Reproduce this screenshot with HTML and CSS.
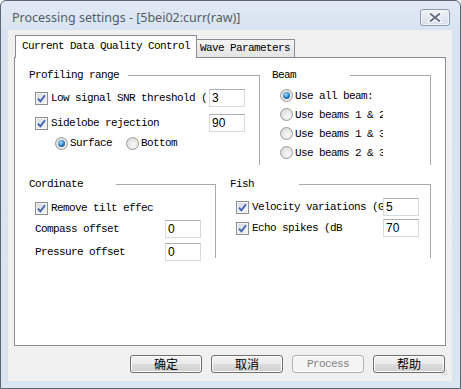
FILE: index.html
```html
<!DOCTYPE html>
<html lang="en">
<head>
  <meta charset="UTF-8">
  <title>Processing settings</title>
  <link rel="stylesheet" href="styles.css">
</head>
<body>
  <div class="window">
    <div class="titlebar">
      <span class="title">Processing settings - [5bei02:curr(raw)]</span>
      <span class="close">
        <svg width="16" height="11" viewBox="0 0 16 11">
          <path d="M3 1.5 L13 9.5 M13 1.5 L3 9.5" stroke="#fbfcfe" stroke-width="4.5" stroke-linecap="round"/>
          <path d="M3 1.5 L13 9.5 M13 1.5 L3 9.5" stroke="#6a7382" stroke-width="2.2"/>
        </svg>
      </span>
    </div>

    <div class="client">
      <div class="tabs">
        <div class="tab tab-active">Current Data Quality Control</div>
        <div class="tab">Wave Parameters</div>
      </div>

      <div class="pane">
        <div class="group-row">
          <!-- Profiling range -->
          <div class="group group-profiling">
            <div class="group-title title-profiling">Profiling range</div>
            <div class="row mt-7">
              <span class="cb"><svg width="9" height="9" viewBox="0 0 9 9"><path d="M1 4.6 L3.4 7.3 L8 1.2" fill="none" stroke="#3f5fae" stroke-width="1.8"/></svg></span>
              <span class="lbl lbl-prof">Low signal SNR threshold (</span>
              <span class="field">3</span>
            </div>
            <div class="row mt-5">
              <span class="cb"><svg width="9" height="9" viewBox="0 0 9 9"><path d="M1 4.6 L3.4 7.3 L8 1.2" fill="none" stroke="#3f5fae" stroke-width="1.8"/></svg></span>
              <span class="lbl lbl-prof">Sidelobe rejection</span>
              <span class="field">90</span>
            </div>
            <div class="row radio-row">
              <span class="rb rb-on"></span><span class="rlbl">Surface</span>
              <span class="rb rb-gap"></span><span class="rlbl">Bottom</span>
            </div>
          </div>

          <!-- Beam -->
          <div class="group group-beam">
            <div class="group-title title-beam">Beam</div>
            <div class="beam-row mt-5"><span class="rb rb-on"></span><span class="lbl lbl-beam">Use all beam:</span></div>
            <div class="beam-row"><span class="rb"></span><span class="lbl lbl-beam">Use beams 1 &amp; 2</span></div>
            <div class="beam-row"><span class="rb"></span><span class="lbl lbl-beam">Use beams 1 &amp; 3</span></div>
            <div class="beam-row"><span class="rb"></span><span class="lbl lbl-beam">Use beams 2 &amp; 3</span></div>
          </div>
        </div>

        <div class="group-row group-row-bottom">
          <!-- Cordinate -->
          <div class="group group-cord">
            <div class="group-title title-cord">Cordinate</div>
            <div class="row mt-8">
              <span class="cb"><svg width="9" height="9" viewBox="0 0 9 9"><path d="M1 4.6 L3.4 7.3 L8 1.2" fill="none" stroke="#3f5fae" stroke-width="1.8"/></svg></span>
              <span class="lbl lbl-tilt">Remove tilt effec</span>
            </div>
            <div class="row mt-1">
              <span class="lbl lbl-cord">Compass offset</span>
              <span class="field">0</span>
            </div>
            <div class="row mt-3">
              <span class="lbl lbl-cord">Pressure offset</span>
              <span class="field">0</span>
            </div>
          </div>

          <!-- Fish -->
          <div class="group group-fish">
            <div class="group-title title-fish">Fish</div>
            <div class="row mt-7">
              <span class="cb"><svg width="9" height="9" viewBox="0 0 9 9"><path d="M1 4.6 L3.4 7.3 L8 1.2" fill="none" stroke="#3f5fae" stroke-width="1.8"/></svg></span>
              <span class="lbl lbl-fish">Velocity variations (G</span>
              <span class="field">5</span>
            </div>
            <div class="row mt-1">
              <span class="cb"><svg width="9" height="9" viewBox="0 0 9 9"><path d="M1 4.6 L3.4 7.3 L8 1.2" fill="none" stroke="#3f5fae" stroke-width="1.8"/></svg></span>
              <span class="lbl lbl-fish">Echo spikes (dB</span>
              <span class="field">70</span>
            </div>
          </div>
        </div>
      </div>

      <div class="buttons">
        <div class="btn">确定</div>
        <div class="btn">取消</div>
        <div class="btn btn-disabled">Process</div>
        <div class="btn">帮助</div>
      </div>

      <svg class="grip" width="6" height="6" viewBox="0 0 6 6">
        <rect x="4" y="0" width="1" height="1" fill="#b8b8b8"/>
        <rect x="2" y="2" width="1" height="1" fill="#b8b8b8"/>
        <rect x="4" y="2" width="1" height="1" fill="#b8b8b8"/>
        <rect x="0" y="4" width="1" height="1" fill="#b8b8b8"/>
        <rect x="2" y="4" width="1" height="1" fill="#b8b8b8"/>
        <rect x="4" y="4" width="1" height="1" fill="#b8b8b8"/>
      </svg>
    </div>
  </div>
</body>
</html>
```

FILE: styles.css
```css
body {
  margin: 0;
  background: #fff;
  font-family: "Liberation Mono", monospace;
  font-size: 11px;
  letter-spacing: -0.6px;
  color: #000;
}
.window {
  width: 461px;
  height: 389px;
  box-sizing: border-box;
  border: 1px solid #5b6573;
  border-radius: 6px 6px 0 0;
  background: linear-gradient(#e1eaf5, #d8e3f1 30px, #dae5f2);
  padding: 0 8px 7px 7px;
  display: flex;
  flex-direction: column;
}
.titlebar {
  height: 29px;
  box-sizing: border-box;
  padding: 4px 2px 0 4px;
  display: flex;
  align-items: center;
  justify-content: space-between;
}
.title {
  font-family: "Noto Sans", sans-serif;
  font-size: 12.5px;
  letter-spacing: 0;
  color: #545c66;
}
.close {
  width: 30px;
  height: 17px;
  box-sizing: border-box;
  border: 1px solid #8e99a8;
  border-radius: 3px;
  background: linear-gradient(#eef2f8, #d6dfeb);
  box-shadow: inset 0 0 0 1px #f4f7fb;
  display: flex;
  align-items: center;
  justify-content: center;
}
.client {
  flex: 1;
  background: #f0f0f0;
  padding: 5px 6px 0;
  position: relative;
}

/* tabs */
.tabs {
  display: flex;
  align-items: flex-end;
  height: 22px;
  padding-left: 1px;
}
.tab {
  width: 99px;
  height: 18px;
  box-sizing: border-box;
  margin-left: -1px;
  border: 1px solid #898c95;
  border-bottom: none;
  background: linear-gradient(#f4f4f4, #e4e4e4);
  padding-left: 3px;
  line-height: 17px;
  white-space: nowrap;
}
.tab-active {
  width: 182px;
  height: 23px;
  margin-left: 0;
  margin-bottom: -1px;
  background: #fff;
  padding-left: 6px;
  line-height: 21px;
  position: relative;
  z-index: 1;
}
.pane {
  height: 289px;
  box-sizing: border-box;
  border: 1px solid #898c95;
  background: #fff;
  padding: 17px 0 0 14px;
}

/* group boxes */
.group-row {
  display: flex;
  gap: 12px;
}
.group-row-bottom {
  margin-top: 19px;
  gap: 14px;
}
.group {
  box-sizing: border-box;
  border-top: 1px solid #a9a9a9;
  border-right: 1px solid #a9a9a9;
}
.group-profiling { width: 231px; height: 90px; }
.group-beam { width: 159px; height: 90px; }
.group-cord { width: 187px; height: 74px; }
.group-fish { width: 201px; height: 74px; }
.group-title {
  height: 12px;
  line-height: 12px;
  margin-top: -7px;
  background: #fff;
  white-space: nowrap;
}
.title-profiling { width: 99px; }
.title-beam { width: 78px; }
.title-cord { width: 87px; }
.title-fish { width: 69px; }

.row {
  display: flex;
  align-items: center;
  height: 20px;
  padding-left: 6px;
}
.beam-row {
  display: flex;
  align-items: center;
  height: 19px;
  padding-left: 8px;
}
.lbl {
  white-space: nowrap;
  overflow: hidden;
  line-height: 14px;
}
.lbl-prof { width: 156px; margin-right: 2px; }
.lbl-beam { width: 88px; }
.lbl-tilt { width: 104px; }
.lbl-cord { width: 130px; }
.lbl-fish { width: 131px; }
.rlbl { line-height: 14px; }

.radio-row { padding-left: 26px; }
.rb-gap { margin-left: 14px; }

.mt-1 { margin-top: 1px; }
.mt-3 { margin-top: 3px; }
.mt-5 { margin-top: 5px; }
.mt-7 { margin-top: 7px; }
.mt-8 { margin-top: 8px; }

/* controls */
.cb {
  flex: none;
  width: 13px;
  height: 13px;
  box-sizing: border-box;
  margin-right: 3px;
  border: 1px solid #8e8f8f;
  background: linear-gradient(135deg, #d3d8e0, #f6f7f9);
  box-shadow: inset 0 0 0 1px #f4f4f4;
  display: flex;
  align-items: center;
  justify-content: center;
}
.rb {
  flex: none;
  width: 13px;
  height: 13px;
  box-sizing: border-box;
  margin-right: 2px;
  border: 1px solid #9a9a9a;
  border-radius: 50%;
  background: radial-gradient(circle at 60% 65%, #f9f9f9, #d4d4d4);
  display: flex;
  align-items: center;
  justify-content: center;
}
.rb-on::after {
  content: "";
  width: 7px;
  height: 7px;
  border-radius: 50%;
  background: radial-gradient(circle at 40% 35%, #a8dcf8, #2a7cc0 55%, #0f3d6e);
}
.field {
  flex: none;
  width: 36px;
  height: 18px;
  box-sizing: border-box;
  border: 1px solid #d5d9e0;
  border-top-color: #abadb3;
  background: #fff;
  padding-left: 2px;
  font-family: "Liberation Sans", sans-serif;
  font-size: 12px;
  letter-spacing: 0;
  line-height: 16px;
}

/* dialog buttons */
.buttons {
  display: flex;
  justify-content: flex-end;
  gap: 9px;
  margin-top: 9px;
  padding-right: 1px;
}
.btn {
  width: 72px;
  height: 18px;
  box-sizing: border-box;
  border: 1px solid #707070;
  border-radius: 3px;
  background: linear-gradient(#f2f2f2 0%, #ebebeb 50%, #dddddd 50%, #cfcfcf 100%);
  box-shadow: inset 0 0 0 1px #fafafa;
  display: flex;
  align-items: center;
  justify-content: center;
  font-family: "Noto Sans CJK SC", sans-serif;
  font-size: 12px;
  letter-spacing: 0;
  line-height: 16px;
}
.btn-disabled {
  border-color: #adb2b5;
  background: #f4f4f4;
  color: #838383;
  font-family: "Liberation Mono", monospace;
  font-size: 11px;
  letter-spacing: -0.6px;
}
.grip {
  position: absolute;
  right: 4px;
  bottom: 5px;
}
```
